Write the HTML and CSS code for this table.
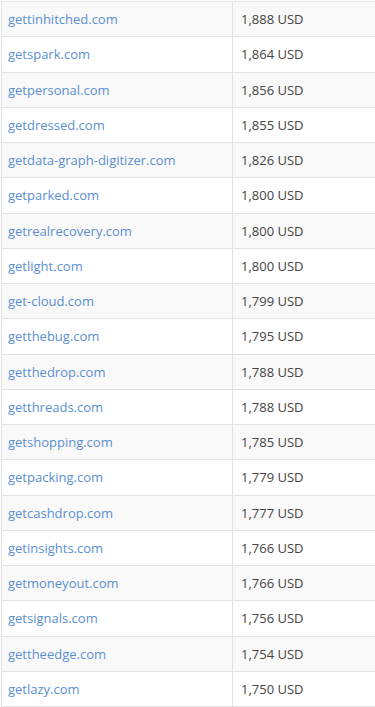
FILE: index.html
```html
<!DOCTYPE html>
<html>
<head>
<meta charset="utf-8">
<link rel="stylesheet" href="styles.css">
</head>
<body>
<div class="wrap">
<table class="domains">
<tbody>
<tr><td class="name"><a href="#">gettinhitched.com</a></td><td class="price">1,888 USD</td></tr>
<tr><td class="name"><a href="#">getspark.com</a></td><td class="price">1,864 USD</td></tr>
<tr><td class="name"><a href="#">getpersonal.com</a></td><td class="price">1,856 USD</td></tr>
<tr><td class="name"><a href="#">getdressed.com</a></td><td class="price">1,855 USD</td></tr>
<tr><td class="name"><a href="#">getdata-graph-digitizer.com</a></td><td class="price">1,826 USD</td></tr>
<tr><td class="name"><a href="#">getparked.com</a></td><td class="price">1,800 USD</td></tr>
<tr><td class="name"><a href="#">getrealrecovery.com</a></td><td class="price">1,800 USD</td></tr>
<tr><td class="name"><a href="#">getlight.com</a></td><td class="price">1,800 USD</td></tr>
<tr><td class="name"><a href="#">get-cloud.com</a></td><td class="price">1,799 USD</td></tr>
<tr><td class="name"><a href="#">getthebug.com</a></td><td class="price">1,795 USD</td></tr>
<tr><td class="name"><a href="#">getthedrop.com</a></td><td class="price">1,788 USD</td></tr>
<tr><td class="name"><a href="#">getthreads.com</a></td><td class="price">1,788 USD</td></tr>
<tr><td class="name"><a href="#">getshopping.com</a></td><td class="price">1,785 USD</td></tr>
<tr><td class="name"><a href="#">getpacking.com</a></td><td class="price">1,779 USD</td></tr>
<tr><td class="name"><a href="#">getcashdrop.com</a></td><td class="price">1,777 USD</td></tr>
<tr><td class="name"><a href="#">getinsights.com</a></td><td class="price">1,766 USD</td></tr>
<tr><td class="name"><a href="#">getmoneyout.com</a></td><td class="price">1,766 USD</td></tr>
<tr><td class="name"><a href="#">getsignals.com</a></td><td class="price">1,756 USD</td></tr>
<tr><td class="name"><a href="#">gettheedge.com</a></td><td class="price">1,754 USD</td></tr>
<tr><td class="name"><a href="#">getlazy.com</a></td><td class="price">1,750 USD</td></tr>
</tbody>
</table>
</div>
</body>
</html>
```
FILE: styles.css
```css
html, body {
  margin: 0;
  padding: 0;
  background: #fff;
}
body {
  font-family: "Open Sans", "Liberation Sans", sans-serif;
  font-size: 13px;
  color: #444;
  overflow: hidden;
}
.wrap {
  padding: 1px 0 0 1px;
}
.domains {
  width: 100%;
  border-collapse: collapse;
  border-top: 1px solid #e2e2e2;
  border-left: 1px solid #e2e2e2;
}
.domains td {
  height: 35.25px;
  box-sizing: border-box;
  padding: 0 8px;
  border-bottom: 1px solid #e2e2e2;
  vertical-align: middle;
  line-height: 18px;
}
.domains tr:nth-child(odd) td {
  background: #f9f9f9;
}
.domains td.name {
  width: 231px;
  box-sizing: border-box;
  padding-left: 6px;
  border-right: 1px solid #e2e2e2;
}
.domains td.price {
  color: #444;
}
.domains a {
  color: #5b8fd2;
  text-decoration: none;
}
```
